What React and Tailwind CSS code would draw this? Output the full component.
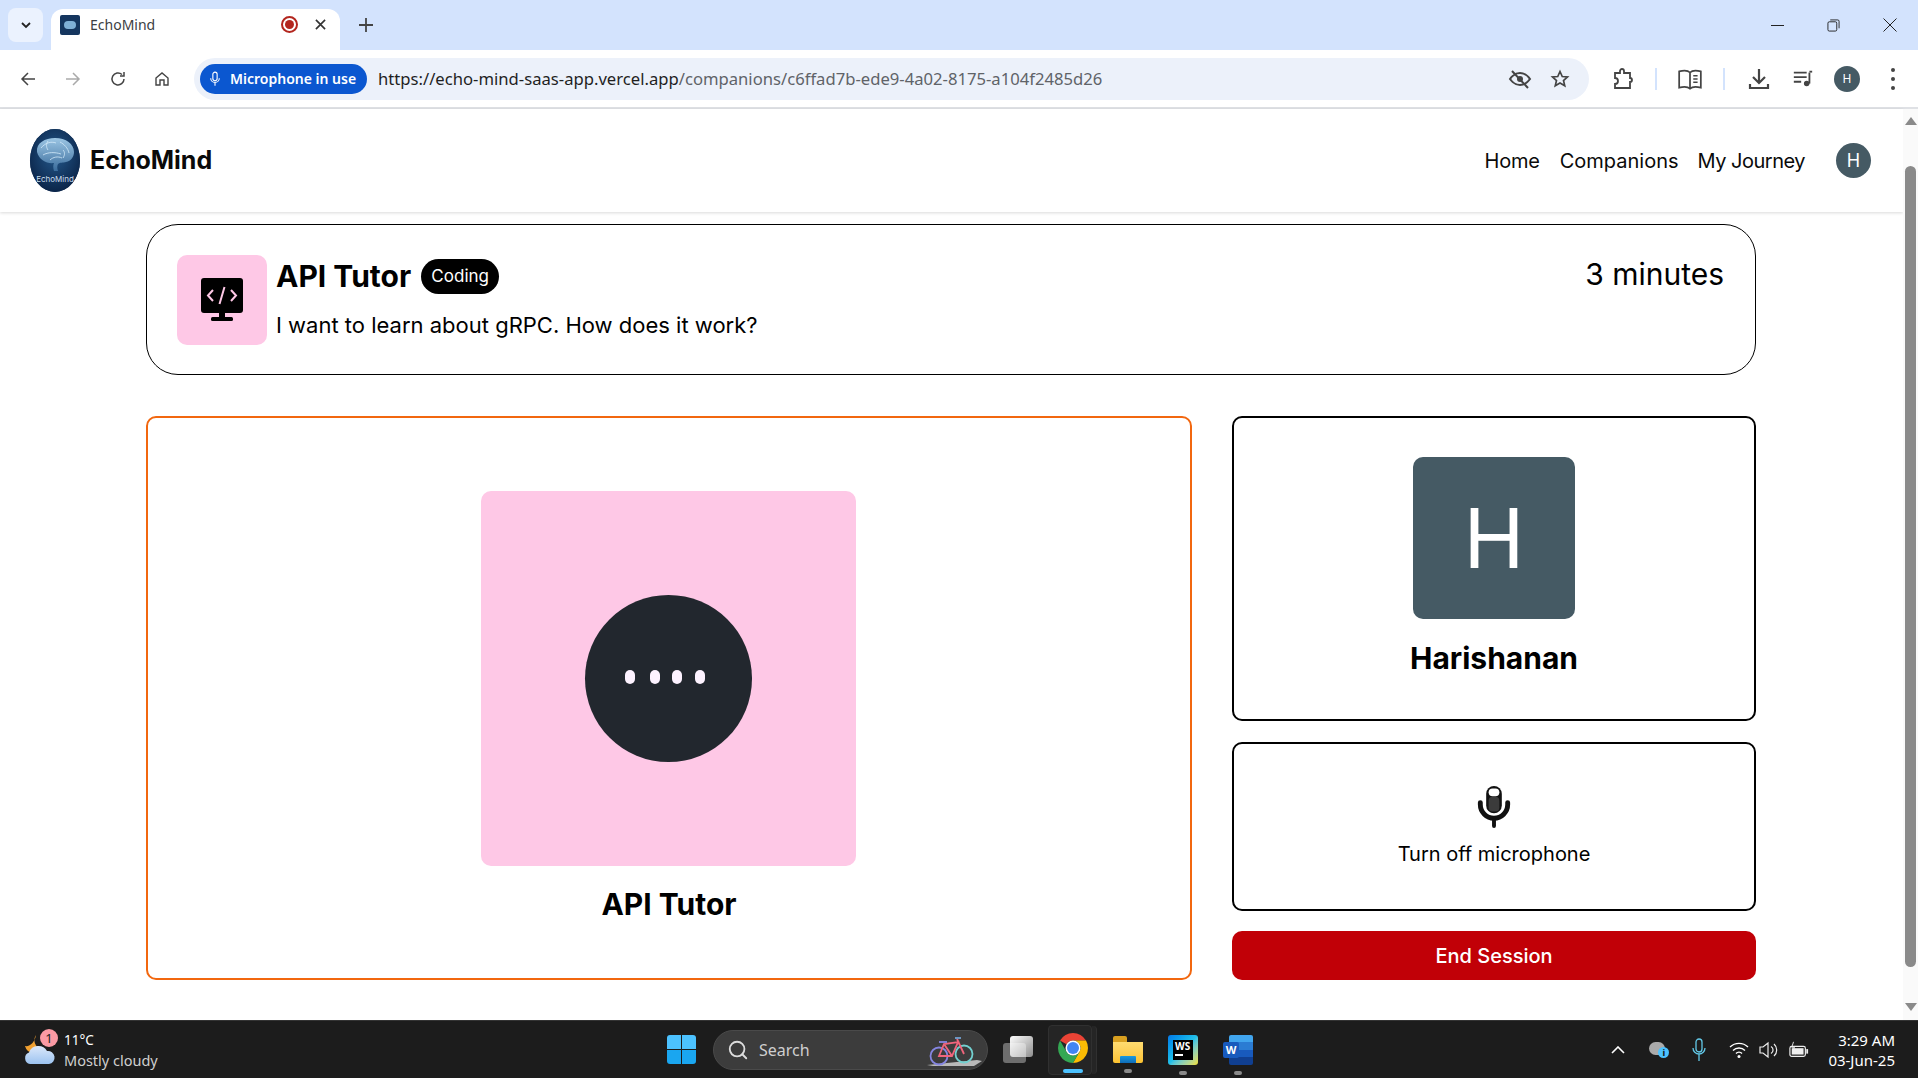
import { Search } from "lucide-react";

const uiFont = { fontFamily: '"Noto Sans", sans-serif' };

const BrainLogo = () => (
  <div className="relative w-[50px] h-[63px] rounded-[50%] overflow-hidden bg-[#0f2c50] flex flex-col items-center">
    <svg viewBox="0 0 50 63" className="w-[50px] h-[63px]">
      <defs>
        <radialGradient id="glow" cx="50%" cy="40%" r="62%">
          <stop offset="0%" stopColor="#24598c" />
          <stop offset="100%" stopColor="#0a2347" />
        </radialGradient>
        <linearGradient id="brain" x1="0" y1="0" x2="0" y2="1">
          <stop offset="0%" stopColor="#9cc6e4" />
          <stop offset="100%" stopColor="#3a6c9c" />
        </linearGradient>
      </defs>
      <rect width="50" height="63" fill="url(#glow)" />
      <path d="M7 23c-1-9 8-14 18-14 11 0 19 6 19 14 0 5-3 9-8 10-3 1-6 0-8 2-1 2-1 4 0 7l-4 0c-1-3-1-6 0-8-7 1-15-3-17-11z" fill="url(#brain)" />
      <path d="M11 19c4-5 10-7 15-5M13 26c5-3 12-3 18-1M30 13c4 2 8 6 9 11M20 31c3-3 8-4 12-2M18 12c-2 3-2 6 0 9M33 21c2 2 2 5 0 8" stroke="#d4ebfa" strokeWidth=".8" fill="none" />
    </svg>
    <span className="absolute top-[45px] text-[8px] leading-[10px] text-[#c9dcec]">EchoMind</span>
  </div>
);

const ChromeLogo = () => (
  <svg viewBox="4 4 40 40" className="w-[30px] h-[30px]">
    <path d="M6.68 14A20 20 0 0 1 41.32 14L24 14A10 10 0 0 0 15.34 19Z" fill="#ea4335" />
    <path d="M41.32 14A20 20 0 0 1 24 44L32.66 29A10 10 0 0 0 24 14Z" fill="#fbbc04" />
    <path d="M24 44A20 20 0 0 1 6.68 14L15.34 29A10 10 0 0 0 32.66 29Z" fill="#34a853" />
    <circle cx="24" cy="24" r="10" fill="#fff" />
    <circle cx="24" cy="24" r="8" fill="#4285f4" />
  </svg>
);

const TabBar = () => (
  <div className="h-[50px] bg-[#d3e3fd] flex items-end">
    <div className="w-[35px] h-[34px] ml-2 mb-[8px] rounded-lg bg-[#ebf2fe] flex items-center justify-center">
      <svg viewBox="0 0 12 12" className="w-3 h-3"><path d="M2 4l4 4 4-4" stroke="#222" strokeWidth="1.800" fill="none" /></svg>
    </div>
    <div className="w-[289px] h-[41px] ml-2 bg-white rounded-t-xl flex items-center pl-[9px] pb-[10px]" style={uiFont}>
      <div className="w-5 h-5 bg-[#15365f] rounded-[2px] flex items-center justify-center">
        <div className="w-3 h-2 rounded-full bg-[#7fb0d6]" />
      </div>
      <span className="ml-[10px] text-[14px] text-[#3c4043] w-[191px]">EchoMind</span>
      <div className="w-[17px] h-[17px] rounded-full border-2 border-[#b3261e] flex items-center justify-center">
        <div className="w-[9px] h-[9px] rounded-full bg-[#b3261e]" />
      </div>
      <svg viewBox="0 0 12 12" className="w-[11px] h-[11px] ml-[17px]"><path d="M1 1l10 10M11 1L1 11" stroke="#333" strokeWidth="1.800" /></svg>
    </div>
    <svg viewBox="0 0 14 14" className="w-[14px] h-[14px] ml-[19px] mb-[18px]"><path d="M7 0v14M0 7h14" stroke="#444" strokeWidth="1.800" /></svg>
    <div className="flex-1" />
    <div className="flex items-center h-full pr-[21px] gap-[43px]">
      <div className="w-[13px] h-px bg-[#222]" />
      <svg viewBox="0 0 14 14" className="w-[13px] h-[13px]"><rect x="1" y="3" width="9.500" height="10" rx="1.500" stroke="#222" fill="none" /><path d="M3.500 1h8a1.500 1.500 0 0 1 1.500 1.500V10" stroke="#222" fill="none" /></svg>
      <svg viewBox="0 0 14 14" className="w-[14px] h-[14px]"><path d="M0.500 0.500l13 13M13.500 0.500l-13 13" stroke="#222" /></svg>
    </div>
  </div>
);

const Toolbar = () => (
  <div className="h-[59px] pt-px bg-white border-b-[2px] border-[#dfe1e5] flex items-center" style={uiFont}>
    <svg viewBox="0 0 16 16" className="w-4 h-4 ml-[20px]"><path d="M15 8H2M8 2L2 8l6 6" stroke="#444" strokeWidth="1.500" fill="none" /></svg>
    <svg viewBox="0 0 16 16" className="w-4 h-4 ml-[29px]"><path d="M1 8h13M8 2l6 6-6 6" stroke="#aaa" strokeWidth="1.500" fill="none" /></svg>
    <svg viewBox="0 0 16 16" className="w-4 h-4 ml-[29px]"><path d="M14 8a6 6 0 1 1-2-4.500M14 1v4h-4" stroke="#444" strokeWidth="1.500" fill="none" /></svg>
    <svg viewBox="0 0 16 16" className="w-4 h-4 ml-[28px]"><path d="M2 7l6-5 6 5v7h-4V9H6v5H2z" stroke="#444" strokeWidth="1.400" fill="none" /></svg>
    <div className="ml-[24px] w-[1395px] h-[42px] rounded-full bg-[#ecf1fa] flex items-center pl-[6px]">
      <div className="w-[167px] h-[30px] rounded-full bg-[#0b57d0] flex items-center pl-[9px] text-white">
        <svg viewBox="0 0 14 18" className="w-[12px] h-[16px]"><rect x="4.500" y="1" width="5" height="10" rx="2.500" stroke="#fff" strokeWidth="1.300" fill="none" /><path d="M2 8a5 5 0 0 0 10 0M7 13v4" stroke="#fff" strokeWidth="1.300" fill="none" /></svg>
        <span className="ml-[9px] text-[14px] font-semibold leading-none whitespace-nowrap">Microphone in use</span>
      </div>
      <span className="ml-[11px] text-[16.650px] text-[#1f1f1f] whitespace-nowrap">
        https://echo-mind-saas-app.vercel.app<span className="text-[#5f6368]">/companions/c6ffad7b-ede9-4a02-8175-a104f2485d26</span>
      </span>
      <div className="flex-1" />
      <svg viewBox="0 0 24 24" className="w-[24px] h-[24px]"><path d="M2 12s4-6 10-6 10 6 10 6-4 6-10 6-10-6-10-6z" stroke="#444" strokeWidth="2" fill="none" /><circle cx="12" cy="12" r="3" fill="#444" /><path d="M4 4l16 17" stroke="#444" strokeWidth="2" /></svg>
      <svg viewBox="0 0 24 24" className="w-[20px] h-[20px] ml-[18px] mr-[19px]"><path d="M12 3l2.700 6 6.300.600-4.800 4.200 1.500 6.400L12 16.900 6.300 20.200l1.500-6.400L3 9.600 9.300 9z" stroke="#444" strokeWidth="2" fill="none" /></svg>
    </div>
    <svg viewBox="0 0 24 24" className="w-[24px] h-[24px] ml-[22px]"><path d="M4 6h5V4a2 2 0 0 1 4 0v2h6v5a2 2 0 0 1 0 4v6H4v-4a3 3 0 0 0 0-6z" stroke="#444" strokeWidth="1.800" fill="none" /></svg>
    <div className="w-[2px] h-[22px] bg-[#d3e3fd] ml-[20px]" />
    <svg viewBox="0 0 24 24" className="w-[26px] h-[26px] ml-[20px]"><path d="M2 5c4-1 8-1 10 1 2-2 6-2 10-1v15c-4-1-8-1-10 1-2-2-6-2-10-1zM12 6v15M15 9h4M15 12h4M15 15h4" stroke="#444" strokeWidth="1.600" fill="none" /></svg>
    <div className="w-[2px] h-[22px] bg-[#d3e3fd] ml-[20px]" />
    <svg viewBox="0 0 24 24" className="w-[24px] h-[24px] ml-[22px]"><path d="M12 2v13M6 10l6 6 6-6M3 17v4h18v-4" stroke="#444" strokeWidth="2.200" fill="none" /></svg>
    <svg viewBox="0 0 24 24" className="w-[22px] h-[22px] ml-[21px]"><path d="M2 5h14M2 10h14M2 15h8" stroke="#444" strokeWidth="2" /><path d="M19 5v12" stroke="#444" strokeWidth="2" /><circle cx="16" cy="17" r="3" fill="#444" /><path d="M19 4h3" stroke="#444" strokeWidth="2" /></svg>
    <div className="w-[26px] h-[26px] ml-[20px] rounded-full bg-[#455a64] text-white text-[12px] flex items-center justify-center">H</div>
    <div className="ml-[31px] flex flex-col gap-[5px]">
      <div className="w-1 h-1 rounded-full bg-[#444]" />
      <div className="w-1 h-1 rounded-full bg-[#444]" />
      <div className="w-1 h-1 rounded-full bg-[#444]" />
    </div>
  </div>
);

const Navbar = () => (
  <nav className="h-[103px] flex items-center justify-between pl-[30px] pr-[32px] shadow-[0_1px_3px_rgba(0,0,0,0.15)]">
    <div className="flex items-center gap-[10px]">
      <BrainLogo />
      <span className="text-[25px] font-bold text-[#0a0a0a]">EchoMind</span>
    </div>
    <div className="flex items-center text-[#0a0a0a] text-[20px]">
      <span className="tracking-[-0.2px]">Home</span>
      <span className="ml-[20px]">Companions</span>
      <span className="ml-[19px] tracking-[-0.5px]">My Journey</span>
      <div className="ml-[31px] w-[35px] h-[35px] rounded-full bg-[#455a64] text-white text-[18px] flex items-center justify-center">H</div>
    </div>
  </nav>
);

const SessionHeader = () => (
  <div className="h-[151px] border border-black rounded-4xl flex items-start justify-between pt-[30px] pl-[30px] pr-[31px]">
    <div className="flex gap-[9px]">
      <div className="w-[90px] h-[90px] rounded-[10px] bg-[#fec8e6] flex items-center justify-center">
        <svg viewBox="0 0 44 44" className="w-[44px] h-[44px]">
          <rect x="1" y="0" width="42" height="35" rx="3" fill="#000" />
          <rect x="19" y="35" width="6" height="4" fill="#000" />
          <rect x="11" y="39" width="22" height="4" rx="1.500" fill="#000" />
          <path d="M13 12l-5 5.500 5 5.500M31 12l5 5.500-5 5.500M24.500 9l-5 17" stroke="#fec8e6" strokeWidth="2" fill="none" />
        </svg>
      </div>
      <div className="flex flex-col">
        <div className="flex items-center gap-[10px] h-[42px]">
          <span className="text-[30px] font-bold leading-none text-black">API Tutor</span>
          <span className="h-[35px] w-[78px] pt-px rounded-full bg-black text-white text-[17px] flex items-center justify-center">Coding</span>
        </div>
        <p className="mt-[11px] text-[22px] leading-[34px] text-black">I want to learn about gRPC. How does it work?</p>
      </div>
    </div>
    <span className="text-[30px] leading-[38px] text-black">3 minutes</span>
  </div>
);

const AgentCard = () => (
  <div className="h-[564px] border-2 border-[#f2670f] rounded-[10px] flex flex-col items-center pt-[73px] pr-[2px]">
    <div className="w-[375px] h-[375px] rounded-[10px] bg-[#fec8e6] flex items-center justify-center">
      <div className="w-[167px] h-[167px] rounded-full bg-[#22272e] flex items-center pl-[40px] pb-1">
        <div className="w-[10px] h-[14px] rounded-full bg-[#fdf2ff]" />
        <div className="w-[10px] h-[14px] rounded-full bg-[#fdf2ff] ml-[15px]" />
        <div className="w-[10px] h-[14px] rounded-full bg-[#fdf2ff] ml-[12px]" />
        <div className="w-[10px] h-[14px] rounded-full bg-[#fdf2ff] ml-[13px]" />
      </div>
    </div>
    <p className="mt-[20px] ml-[2px] text-[30px] leading-[36px] font-bold text-black">API Tutor</p>
  </div>
);

const UserColumn = () => (
  <div className="flex flex-col">
    <div className="h-[305px] border-2 border-black rounded-[10px] flex flex-col items-center pt-[39px]">
      <div className="w-[162px] h-[162px] rounded-[10px] bg-[#455a64] text-white text-[82px] flex items-center justify-center">H</div>
      <p className="mt-[21px] text-[30px] leading-[36px] font-bold text-black">Harishanan</p>
    </div>
    <div className="mt-[21px] h-[169px] border-2 border-black rounded-[10px] flex flex-col items-center pt-[41px]">
      <svg viewBox="0 0 34 44" className="w-[34px] h-[43px]">
        <rect x="9" y="1" width="16" height="28" rx="8" fill="#111" />
        <rect x="11.500" y="12" width="11" height="15" rx="4" fill="#3b3b3b" />
        <rect x="11.500" y="3.500" width="11" height="8" rx="4" fill="#fff" />
        <path d="M3 18v2a14 14 0 0 0 28 0v-2" stroke="#111" strokeWidth="5" fill="none" strokeLinecap="round" />
        <rect x="15" y="34" width="4" height="10" rx="2" fill="#111" />
      </svg>
      <p className="mt-[12px] text-[20px] leading-[28px] text-black">Turn off microphone</p>
    </div>
    <button className="mt-[20px] h-[49px] rounded-[10px] bg-[#c10007] text-white text-[20px] font-medium">End Session</button>
  </div>
);

const Scrollbar = () => (
  <div className="w-[15px] bg-[#fafafa] flex flex-col items-center">
    <div className="mt-[8px] w-0 h-0 border-l-[6px] border-r-[6px] border-b-[8px] border-l-transparent border-r-transparent border-b-[#8a8a8a]" />
    <div className="mt-[41px] w-[11px] h-[801px] rounded-full bg-[#8a8a8a]" />
    <div className="mt-[36px] w-0 h-0 border-l-[6px] border-r-[6px] border-t-[8px] border-l-transparent border-r-transparent border-t-[#8a8a8a]" />
  </div>
);

const Taskbar = () => (
  <div className="h-[58px] bg-[#1c1c1c] border-t border-[#333] flex items-center relative" style={uiFont}>
    {/* weather */}
    <div className="relative ml-[24px] w-[32px] h-[36px]">
      <svg viewBox="0 0 32 36" className="w-[32px] h-[36px]">
        <defs>
          <linearGradient id="cloud" x1="0" y1="0" x2="0" y2="1">
            <stop offset="0%" stopColor="#dbe8fa" />
            <stop offset="100%" stopColor="#9cc3f0" />
          </linearGradient>
        </defs>
        <path d="M12 3a9 9 0 0 0 6 14 9.500 9.500 0 0 1-17-3c5 1 10-4 11-11z" fill="#f0a030" />
        <path d="M6 32a6 6 0 0 1-1-11.500A10 10 0 0 1 23 19a6.500 6.500 0 0 1 2 13z" fill="url(#cloud)" />
      </svg>
      <div className="absolute -top-[3px] left-[16px] w-[18px] h-[18px] rounded-full bg-[#fb9aa4] text-[#222] text-[13px] leading-[18px] text-center">1</div>
    </div>
    <div className="ml-[8px] flex flex-col leading-[20px] w-[100px]">
      <span className="text-[13.500px] text-white">11°C</span>
      <span className="text-[14.500px] text-[#cfcfcf] whitespace-nowrap">Mostly cloudy</span>
    </div>
    <div className="ml-[503px] w-[29px] h-[29px] grid grid-cols-2 gap-[1px]">
      <div className="bg-[#4cc2ff] rounded-tl-[3px]" />
      <div className="bg-[#4cc2ff] rounded-tr-[3px]" />
      <div className="bg-[#1aa6f0] rounded-bl-[3px]" />
      <div className="bg-[#1aa6f0] rounded-br-[3px]" />
    </div>
    <div className="ml-[17px] w-[275px] h-[40px] rounded-full bg-[#3c3c3c] border border-[#4a4a4a] flex items-center pl-[13px]">
      <Search size={22} color="#ddd" />
      <span className="ml-[10px] text-[16px] text-[#cfcfcf] w-[168px]">Search</span>
      <svg viewBox="0 0 56 30" className="w-[56px] h-[30px] mt-[3px]">
        <path d="M0 29L50 24L55 25L47 30H6z" fill="#b9b9b9" />
        <circle cx="12" cy="20" r="8.500" stroke="#8585e0" strokeWidth="1.800" fill="none" />
        <circle cx="37" cy="18" r="8.500" stroke="#72d0d0" strokeWidth="1.800" fill="none" />
        <path d="M12 20L17 8L31 6L25 20ZM17 8L25 20M30 3L37 18" stroke="#f0657c" strokeWidth="1.800" fill="none" />
        <path d="M12 6h8" stroke="#8585e0" strokeWidth="1.800" />
        <path d="M28 2h6" stroke="#72a0d0" strokeWidth="1.800" />
      </svg>
    </div>
    <div className="ml-[15px] relative w-[30px] h-[27px]">
      <div className="absolute left-0 bottom-0 w-[23px] h-[20px] rounded-[3px] bg-[#6e6e6e]" />
      <div className="absolute right-0 top-0 w-[23px] h-[21px] rounded-[3px] bg-gradient-to-br from-[#ffffff] to-[#ffffff80]" />
    </div>
    <div className="ml-[15px] relative w-[44px] h-[50px] rounded-[4px] bg-[#252525] border border-[#303030] flex items-center justify-center pl-[6px] pb-[4px]">
      <ChromeLogo />
      <div className="absolute bottom-[1px] left-[14px] w-[20px] h-[4px] rounded-full bg-[#4cc2ff]" />
    </div>
    <div className="w-[5px] h-[48px] rounded-r-[4px] bg-[#252525] border-r border-[#303030]" />
    <div className="ml-[16px] relative w-[30px] h-[27px]">
      <div className="w-[14px] h-[6px] rounded-t-[2px] bg-[#d9a020]" />
      <div className="w-[30px] h-[21px] rounded-b-[2px] bg-gradient-to-b from-[#ffdc70] to-[#fcc22e] flex items-end justify-center">
        <div className="w-[16px] h-[7px] rounded-t-[1px] bg-gradient-to-b from-[#1a9ae0] to-[#0f6cb8]" />
      </div>
      <div className="absolute -bottom-[10px] left-[11px] w-[8px] h-[4px] rounded-full bg-[#8a8a8a]" />
    </div>
    <div className="ml-[25px] relative w-[30px] h-[30px] rounded-[3px] bg-gradient-to-br from-[#0a78e8] via-[#22c0e8] to-[#f0e020] flex items-center justify-center">
      <div className="w-[20px] h-[20px] bg-black flex flex-col pl-[2px]">
        <span className="text-white text-[10px] font-bold leading-[13px]">WS</span>
        <div className="mt-[1px] w-[8px] h-[2px] bg-white" />
      </div>
      <div className="absolute -bottom-[10px] left-[11px] w-[8px] h-[4px] rounded-full bg-[#8a8a8a]" />
    </div>
    <div className="ml-[25px] relative w-[30px] h-[30px] flex items-center">
      <div className="ml-[6px] w-[24px] h-[30px] rounded-[2px] overflow-hidden flex flex-col">
        <div className="flex-1 bg-[#41a5ee]" />
        <div className="flex-1 bg-[#2b7cd3]" />
        <div className="flex-1 bg-[#185abd]" />
        <div className="flex-1 bg-[#103f91]" />
      </div>
      <div className="absolute left-0 top-[7px] w-[16px] h-[16px] rounded-[2px] bg-[#185abd] text-white text-[11px] font-bold leading-[16px] text-center">W</div>
      <div className="absolute -bottom-[10px] left-[11px] w-[8px] h-[4px] rounded-full bg-[#8a8a8a]" />
    </div>
    <div className="flex-1" />
    {/* tray */}
    <svg viewBox="0 0 14 8" className="w-[14px] h-[8px]"><path d="M1 7l6-6 6 6" stroke="#fff" strokeWidth="1.600" fill="none" /></svg>
    <div className="relative ml-[24px] w-[20px] h-[16px]">
      <div className="w-[16px] h-[13px] rounded-full bg-[#aaa]" />
      <div className="absolute right-0 bottom-0 w-[11px] h-[11px] rounded-full bg-[#4cc2ff] text-[#111] text-[9px] font-bold leading-[11px] text-center">i</div>
    </div>
    <svg viewBox="0 0 14 24" className="ml-[23px] w-[14px] h-[24px]"><rect x="4" y="1" width="6" height="13" rx="3" stroke="#63c9e8" strokeWidth="1.300" fill="none" /><path d="M1 10a6 6 0 0 0 12 0M7 16v7" stroke="#63c9e8" strokeWidth="1.300" fill="none" /></svg>
    <svg viewBox="0 0 20 16" className="ml-[23px] w-[20px] h-[16px]"><path d="M1 5a13 13 0 0 1 18 0M4 8.500a8.500 8.500 0 0 1 12 0M7 11.500a4 4 0 0 1 6 0" stroke="#fff" strokeWidth="1.400" fill="none" /><circle cx="10" cy="14.500" r="1.500" fill="#fff" /></svg>
    <svg viewBox="0 0 20 18" className="ml-[10px] w-[20px] h-[18px]"><path d="M1 6h3l5-4v14l-5-4H1zM12 5.500a4 4 0 0 1 0 7M15 3a8 8 0 0 1 0 12" stroke="#eee" strokeWidth="1.200" fill="none" /></svg>
    <svg viewBox="0 0 22 18" className="ml-[10px] w-[20px] h-[18px]"><rect x="1" y="5" width="17" height="11" rx="2" stroke="#eee" strokeWidth="1.300" fill="none" /><rect x="3" y="7" width="13" height="7" fill="#eee" /><rect x="19" y="8" width="2" height="5" fill="#eee" /><path d="M5 0l-2 6h3l-2 5" stroke="#eee" fill="none" /></svg>
    <div className="ml-[19px] mr-[23px] flex flex-col items-end leading-[20px] text-white text-[15px]">
      <span>3:29 AM</span>
      <span>03-Jun-25</span>
    </div>
  </div>
);

export default function App() {
  return (
    <div className="h-[1078px] w-full flex flex-col overflow-hidden bg-white font-['Inter',sans-serif]">
      <TabBar />
      <Toolbar />
      <div className="flex-1 flex min-h-0">
        <main className="flex-1 min-w-0">
          <Navbar />
          <div className="pl-[146px] pr-[147px] pt-3">
            <SessionHeader />
            <div className="mt-[41px] grid grid-cols-[1046px_524px] gap-[40px]">
              <AgentCard />
              <UserColumn />
            </div>
          </div>
        </main>
        <Scrollbar />
      </div>
      <Taskbar />
    </div>
  );
}
